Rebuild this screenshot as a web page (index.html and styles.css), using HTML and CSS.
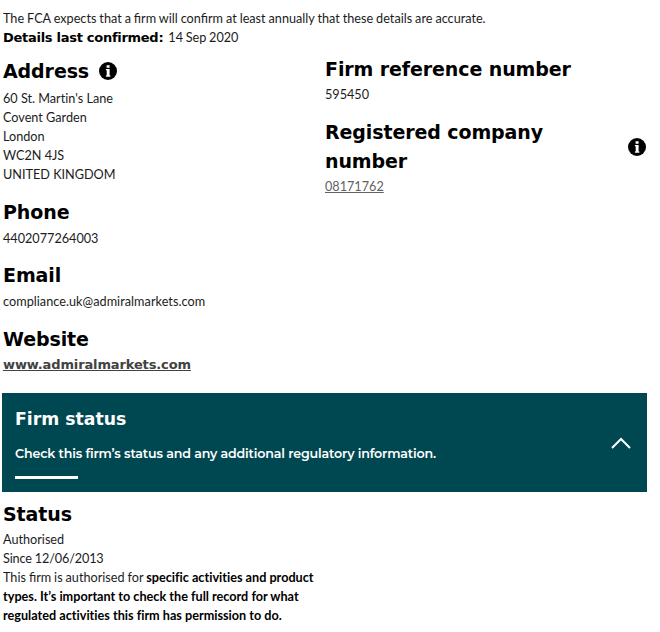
FILE: index.html
```html
<!DOCTYPE html>
<html lang="en">
<head>
  <meta charset="UTF-8">
  <meta name="viewport" content="width=device-width, initial-scale=1.0">
  <title>Firm details</title>
  <link rel="stylesheet" href="styles.css">
</head>
<body>
  <div class="intro">
    <p class="intro-text">The FCA expects that a firm will confirm at least annually that these details are accurate.</p>
    <p><strong class="confirmed-label">Details last confirmed:</strong><span class="confirmed-date">14 Sep 2020</span></p>
  </div>

  <div class="details">
    <div class="column">
      <section class="detail address">
        <div class="heading-row">
          <h2>Address</h2>
          <svg class="info-icon" viewBox="0 0 18 18">
            <circle cx="9" cy="9" r="9"/>
            <path fill="#fff" d="M7.6 3.3h3v2.5h-3zM6.9 7h3.7v6.4h.8v1.3H6.9v-1.3h.8V8.3h-.8z"/>
          </svg>
        </div>
        <p>60 St. Martin's Lane<br>Covent Garden<br>London<br>WC2N 4JS<br>UNITED KINGDOM</p>
      </section>
      <section class="detail phone">
        <h2>Phone</h2>
        <p>4402077264003</p>
      </section>
      <section class="detail">
        <h2>Email</h2>
        <p class="email">compliance.uk@admiralmarkets.com</p>
      </section>
      <section class="detail">
        <h2>Website</h2>
        <p><a class="website" href="#">www.admiralmarkets.com</a></p>
      </section>
    </div>

    <div class="column numbers">
      <section class="detail">
        <h2>Firm reference number</h2>
        <p>595450</p>
      </section>
      <section class="detail">
        <div class="heading-row spread">
          <h2>Registered company<br>number</h2>
          <svg class="info-icon" viewBox="0 0 18 18">
            <circle cx="9" cy="9" r="9"/>
            <path fill="#fff" d="M7.6 3.3h3v2.5h-3zM6.9 7h3.7v6.4h.8v1.3H6.9v-1.3h.8V8.3h-.8z"/>
          </svg>
        </div>
        <p><a class="company-link" href="#">08171762</a></p>
      </section>
    </div>
  </div>

  <div class="banner">
    <div class="banner-text">
      <h3>Firm status</h3>
      <p>Check this firm’s status and any additional regulatory information.</p>
      <div class="banner-line"></div>
    </div>
    <svg class="chevron" viewBox="0 0 20 12">
      <path d="M1 11L10 2l9 9" fill="none" stroke="#fff" stroke-width="2"/>
    </svg>
  </div>

  <section class="status">
    <h2>Status</h2>
    <p>Authorised</p>
    <p class="since">Since 12/06/2013</p>
    <p class="notice">This firm is authorised for <strong>specific activities and product<br>types. It’s important to check the full record for what<br>regulated activities this firm has permission to do.</strong></p>
  </section>
</body>
</html>
```
FILE: styles.css
```css
body {
  font-family: Lato, sans-serif;
  font-size: 12.67px;
  line-height: 19px;
  color: #1c1c1c;
  background-color: #ffffff;
  margin: 0;
  padding: 9px 14px 0 3px;
}

h2, h3, p {
  margin: 0;
}

h2 {
  font-family: Verdana, "DejaVu Sans", sans-serif;
  font-size: 19px;
  font-weight: bold;
  line-height: 28.5px;
  letter-spacing: -0.1px;
  color: #000000;
}

.intro-text {
  word-spacing: -0.3px;
}

.confirmed-label {
  font-family: Verdana, "DejaVu Sans", sans-serif;
  font-size: 13px;
  letter-spacing: -0.28px;
  color: #000000;
}

.confirmed-date {
  margin-left: 5px;
  word-spacing: -0.5px;
}

.details {
  display: grid;
  grid-template-columns: 322px 1fr;
  margin-top: 8px;
}

.detail {
  margin-bottom: 14px;
}

.detail p {
  margin-top: 2px;
}

.address {
  padding-top: 2px;
  font-variant-ligatures: none;
}

.address p {
  margin-top: 3px;
}

.phone {
  margin-bottom: 13.5px;
}

.phone p {
  margin-top: 2.5px;
}

.numbers p {
  margin-top: 1.5px;
}

.heading-row {
  display: flex;
  align-items: center;
  gap: 10px;
}

.spread {
  justify-content: space-between;
}

.info-icon {
  width: 18px;
  height: 18px;
  flex-shrink: 0;
}

.email {
  letter-spacing: 0.04px;
}

.website {
  font-family: Verdana, "DejaVu Sans", sans-serif;
  font-size: 13px;
  letter-spacing: -0.13px;
  font-weight: bold;
  color: #424242;
}

.company-link {
  color: #626262;
}

.banner {
  display: flex;
  justify-content: space-between;
  align-items: center;
  height: 99px;
  box-sizing: border-box;
  margin: 5px -1px 0 -1px;
  padding: 0 16px 0 13px;
  background-color: #004851;
  color: #ffffff;
}

.banner h3 {
  font-family: Verdana, "DejaVu Sans", sans-serif;
  font-size: 17.3px;
  line-height: 24px;
}

.banner p {
  font-family: Montserrat, Lato, sans-serif;
  font-size: 12.67px;
  font-weight: 600;
  letter-spacing: -0.16px;
  margin-top: 13px;
}

.banner-line {
  width: 63px;
  height: 3px;
  margin-top: 13px;
  background-color: #ffffff;
}

.chevron {
  width: 20px;
  height: 12px;
}

.status {
  margin-top: 8px;
}

.status h2 {
  margin-bottom: 1.5px;
}

.since {
  letter-spacing: -0.15px;
}

.notice {
  word-spacing: -0.3px;
}

.status strong {
  color: #000000;
  font-variant-ligatures: none;
  word-spacing: 0;
}
```
